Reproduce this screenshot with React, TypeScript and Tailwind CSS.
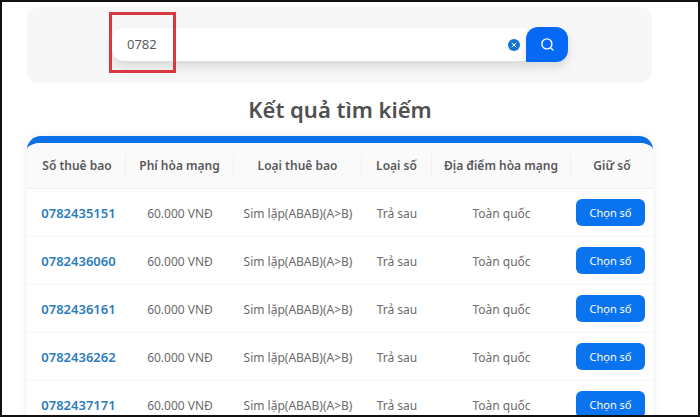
import { Search, X } from 'lucide-react'

const rows = ['0782435151', '0782436060', '0782436161', '0782436262', '0782437171']
const cols = 'grid grid-cols-[99px_108px_128px_70px_139px_82px] items-center'
const headers = ['Số thuê bao', 'Phí hòa mạng', 'Loại thuê bao', 'Loại số', 'Địa điểm hòa mạng', 'Giữ số']

export default function App() {
  return (
    <div className="relative h-[417px] w-[700px] overflow-hidden border-2 border-[#111] bg-white font-['Noto_Sans',sans-serif] text-[#6b6b6b]">
      <div className="ml-[25px] mt-[5px] flex h-[76px] w-[625px] items-center rounded-xl bg-[#f7f7f7] pb-px pl-[85px]">
        <div className="flex h-[33px] w-[415px] items-center justify-between rounded-l-xl bg-white pl-[15px] pr-[7px] shadow-[0_6px_12px_rgba(0,0,0,0.12)]">
          <span className="text-[13px] text-[#5c5c5c]">0782</span>
          <span className="flex h-3 w-3 items-center justify-center rounded-full bg-[#1273d4] text-white">
            <X size={8} strokeWidth={3} />
          </span>
        </div>
        <button className="-ml-px flex h-[35px] w-[42px] items-center justify-center rounded-xl rounded-bl-none bg-[#0569f5] text-white shadow-[0_5px_10px_rgba(0,0,0,0.12)]">
          <Search size={15} strokeWidth={2.25} />
        </button>
      </div>

      <h1 className="mt-[9px] h-[34px] w-[676px] text-center text-[22px] font-semibold leading-[34px] text-[#505050]">Kết quả tìm kiếm</h1>

      <div className="ml-[25px] mt-[10px] w-[626px] rounded-t-[14px] border-t-[7px] border-[#0a70e8] bg-white shadow-[0_0_12px_rgba(0,0,0,0.07)]">
        <div className={`${cols} h-[46px] rounded-t-xl border-b border-[#f1f1f1] bg-[#fafafa]`}>
          {headers.map((h, i) => (
            <div key={h} className={`flex h-[24px] items-center justify-center text-[12px] font-semibold text-[#595959] ${i === 0 ? 'pl-0.5' : ''} ${i < 5 ? 'border-r border-[#f0f0f0]' : ''}`}>
              {h}
            </div>
          ))}
        </div>
        {rows.map((n) => (
          <div key={n} className={`${cols} h-[48px] border-b border-[#f6f6f6] text-center text-[12px]`}>
            <a className="pl-1 pt-0.5 text-[13px] font-semibold text-[#2a7cbd]">{n}</a>
            <div className="pt-0.5">60.000 VNĐ</div>
            <div className="pt-0.5">Sim lặp(ABAB)(A&gt;B)</div>
            <div className="pt-0.5">Trả sau</div>
            <div className="pt-0.5">Toàn quốc</div>
            <div className="flex justify-end pr-2">
              <button className="h-[27px] w-[69px] rounded-md bg-[#0a74ee] pt-0.5 text-[11px] text-white">Chọn số</button>
            </div>
          </div>
        ))}
      </div>

      <div className="absolute left-[107px] top-[10px] h-[61px] w-[67px] border-[3px] border-[#d63a40]" />
    </div>
  )
}
